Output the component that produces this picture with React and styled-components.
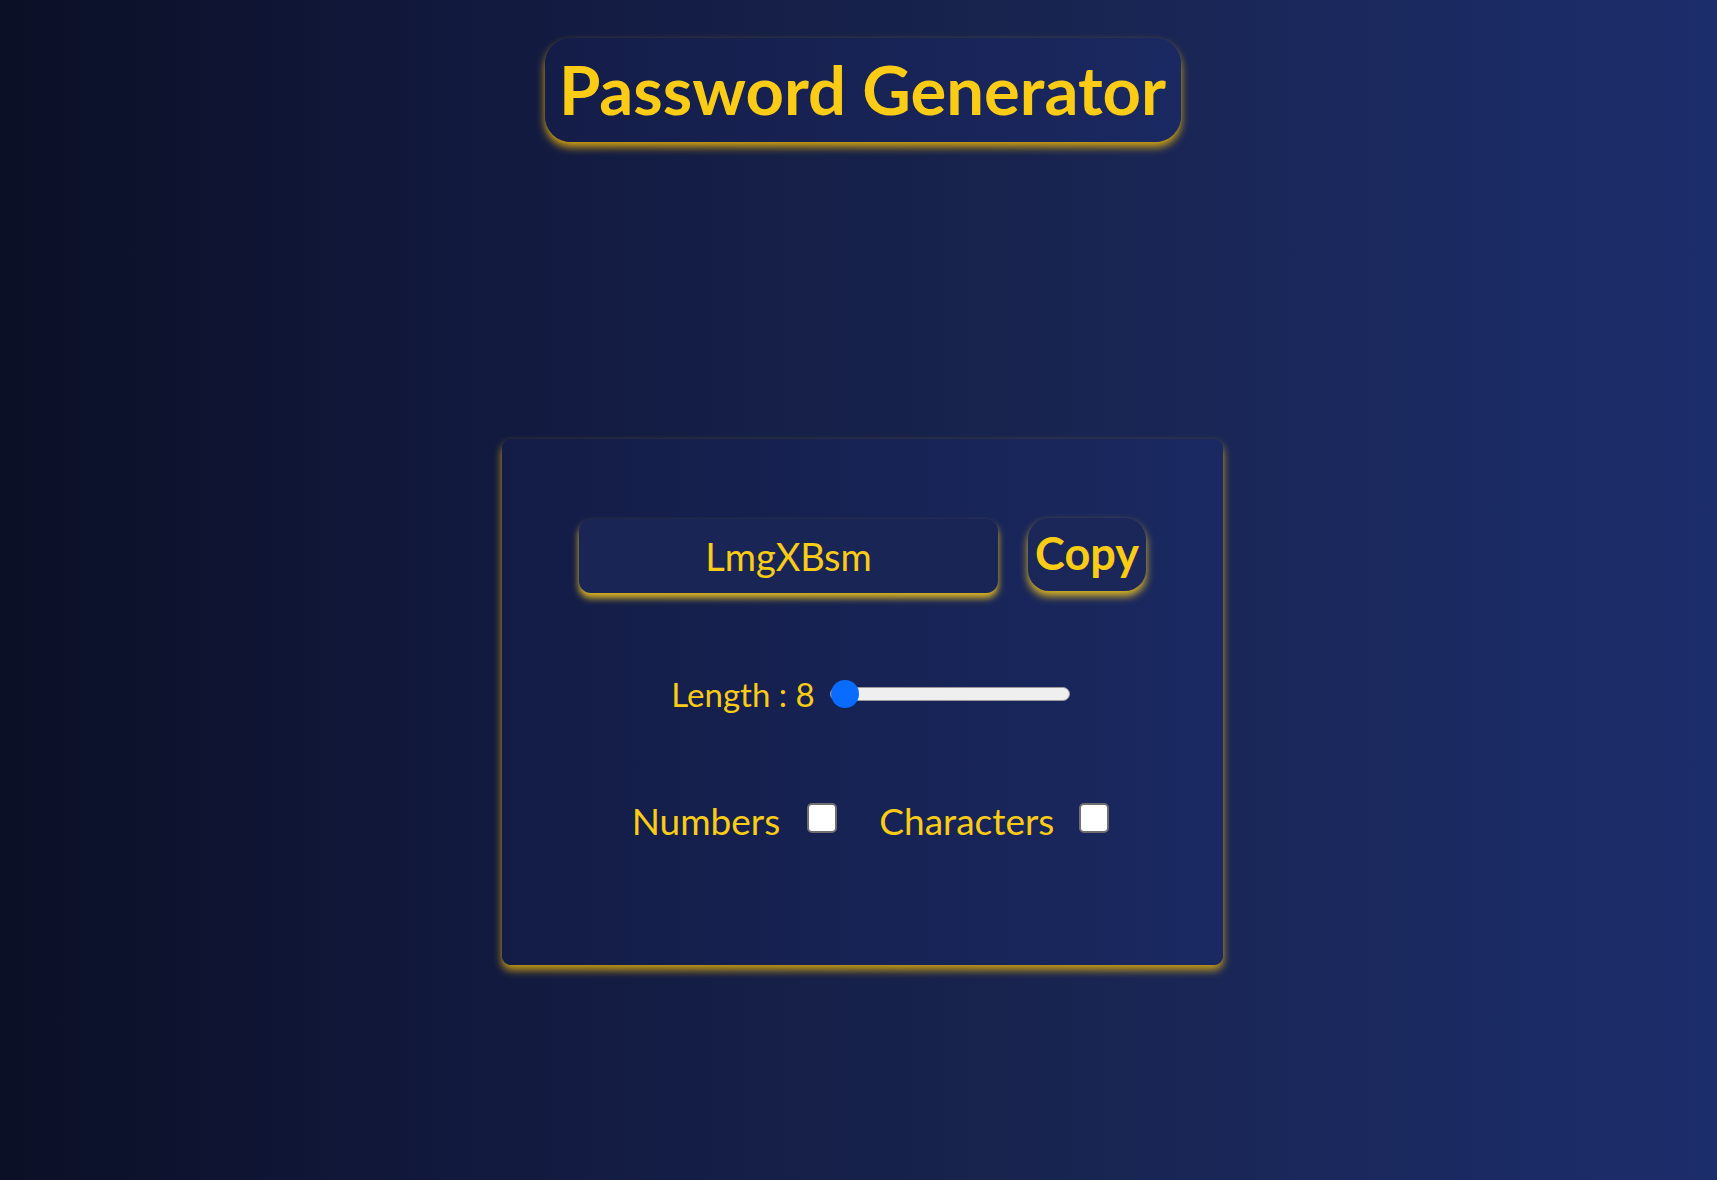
import React, { useState } from 'react';
import styled, { createGlobalStyle } from 'styled-components';

const GlobalStyle = createGlobalStyle`
  html, body {
    margin: 0;
    padding: 0;
    min-height: 100%;
  }
  body {
    font-family: Lato, "Open Sans", sans-serif;
    background: linear-gradient(to right, #0b1026 0%, #121a40 30%, #18244f 60%, #1c2d6c 100%);
    min-height: 1180px;
  }
`;

const Page = styled.div`
  display: flex;
  flex-direction: column;
  align-items: center;
  padding: 38px 0 0 8px;
  min-height: 1180px;
  box-sizing: border-box;
`;

const TitleBox = styled.h1`
  margin: 0;
  width: 636px;
  height: 104px;
  box-sizing: border-box;
  display: flex;
  align-items: center;
  justify-content: center;
  border-radius: 26px;
  background: linear-gradient(to right, #141d48, #1b2962);
  box-shadow: 0 5px 8px rgba(234, 179, 8, 0.9);
  color: #facc15;
  font-size: 67px;
  font-weight: 700;
  padding-bottom: 2px;
`;

const Card = styled.div`
  margin-top: 297px;
  width: 721px;
  height: 526px;
  box-sizing: border-box;
  border-radius: 9px;
  background: linear-gradient(to right, #131c45, #1a2962);
  box-shadow: 0 5px 9px rgba(234, 179, 8, 0.85);
  display: flex;
  flex-direction: column;
  align-items: center;
  padding-top: 77px;
`;

const InputRow = styled.div`
  display: flex;
  align-items: center;
  gap: 30px;
`;

const PasswordField = styled.input`
  width: 419px;
  height: 74px;
  box-sizing: border-box;
  border: none;
  outline: none;
  border-radius: 12px;
  background: #192555;
  box-shadow: 0 5px 7px rgba(234, 193, 30, 0.95);
  color: #facc15;
  font-family: Lato, "Open Sans", sans-serif;
  font-size: 38px;
  text-align: center;
  margin-top: 3px;
`;

const CopyButton = styled.button`
  width: 118px;
  height: 73px;
  border: none;
  border-radius: 21px;
  background: #1a2758;
  box-shadow: 0 5px 8px rgba(234, 193, 30, 0.95);
  color: #facc15;
  font-family: Lato, "Open Sans", sans-serif;
  font-size: 45px;
  font-weight: 700;
  padding: 0 0 4px;
  cursor: pointer;
`;

const Row = styled.div`
  display: flex;
  align-items: center;
  gap: ${(p) => p.gap}px;
  margin-top: ${(p) => p.top}px;
  padding-left: 16px;
`;

const Label = styled.label`
  color: #facc15;
  font-size: ${(p) => p.size}px;
  display: flex;
  align-items: center;
  gap: ${(p) => p.gap || 0}px;
`;

const Slider = styled.input`
  -webkit-appearance: none;
  appearance: none;
  width: 240px;
  height: 28px;
  margin: 0;
  background: transparent;
  cursor: pointer;

  &::-webkit-slider-runnable-track {
    height: 14px;
    border-radius: 7px;
    background: #efefef;
    border: 1px solid #9a9a9a;
    box-sizing: border-box;
  }
  &::-webkit-slider-thumb {
    -webkit-appearance: none;
    width: 28px;
    height: 28px;
    border-radius: 50%;
    background: #0a6cff;
    border: none;
    margin-top: -8px;
  }
`;

const Check = styled.input`
  -webkit-appearance: none;
  appearance: none;
  width: 30px;
  height: 30px;
  margin: 0 0 6px;
  box-sizing: border-box;
  background: #fff;
  border: 2px solid #6f6f6f;
  border-radius: 5px;
  cursor: pointer;

  &:checked {
    background: #0a6cff;
    border-color: #0a6cff;
  }
`;

export default function App() {
  const [length, setLength] = useState(8);
  const [numbers, setNumbers] = useState(false);
  const [chars, setChars] = useState(false);

  return (
    <>
      <GlobalStyle />
      <Page>
        <TitleBox>Password Generator</TitleBox>
        <Card>
          <InputRow>
            <PasswordField type="text" value="LmgXBsm" readOnly />
            <CopyButton>Copy</CopyButton>
          </InputRow>
          <Row top={81} gap={15}>
            <Label size={33}>Length : {length}</Label>
            <Slider
              type="range"
              min={8}
              max={100}
              value={length}
              onChange={(e) => setLength(Number(e.target.value))}
            />
          </Row>
          <Row top={84} gap={42}>
            <Label size={37} gap={27}>
              Numbers
              <Check type="checkbox" checked={numbers} onChange={() => setNumbers(!numbers)} />
            </Label>
            <Label size={37} gap={25}>
              Characters
              <Check type="checkbox" checked={chars} onChange={() => setChars(!chars)} />
            </Label>
          </Row>
        </Card>
      </Page>
    </>
  );
}
